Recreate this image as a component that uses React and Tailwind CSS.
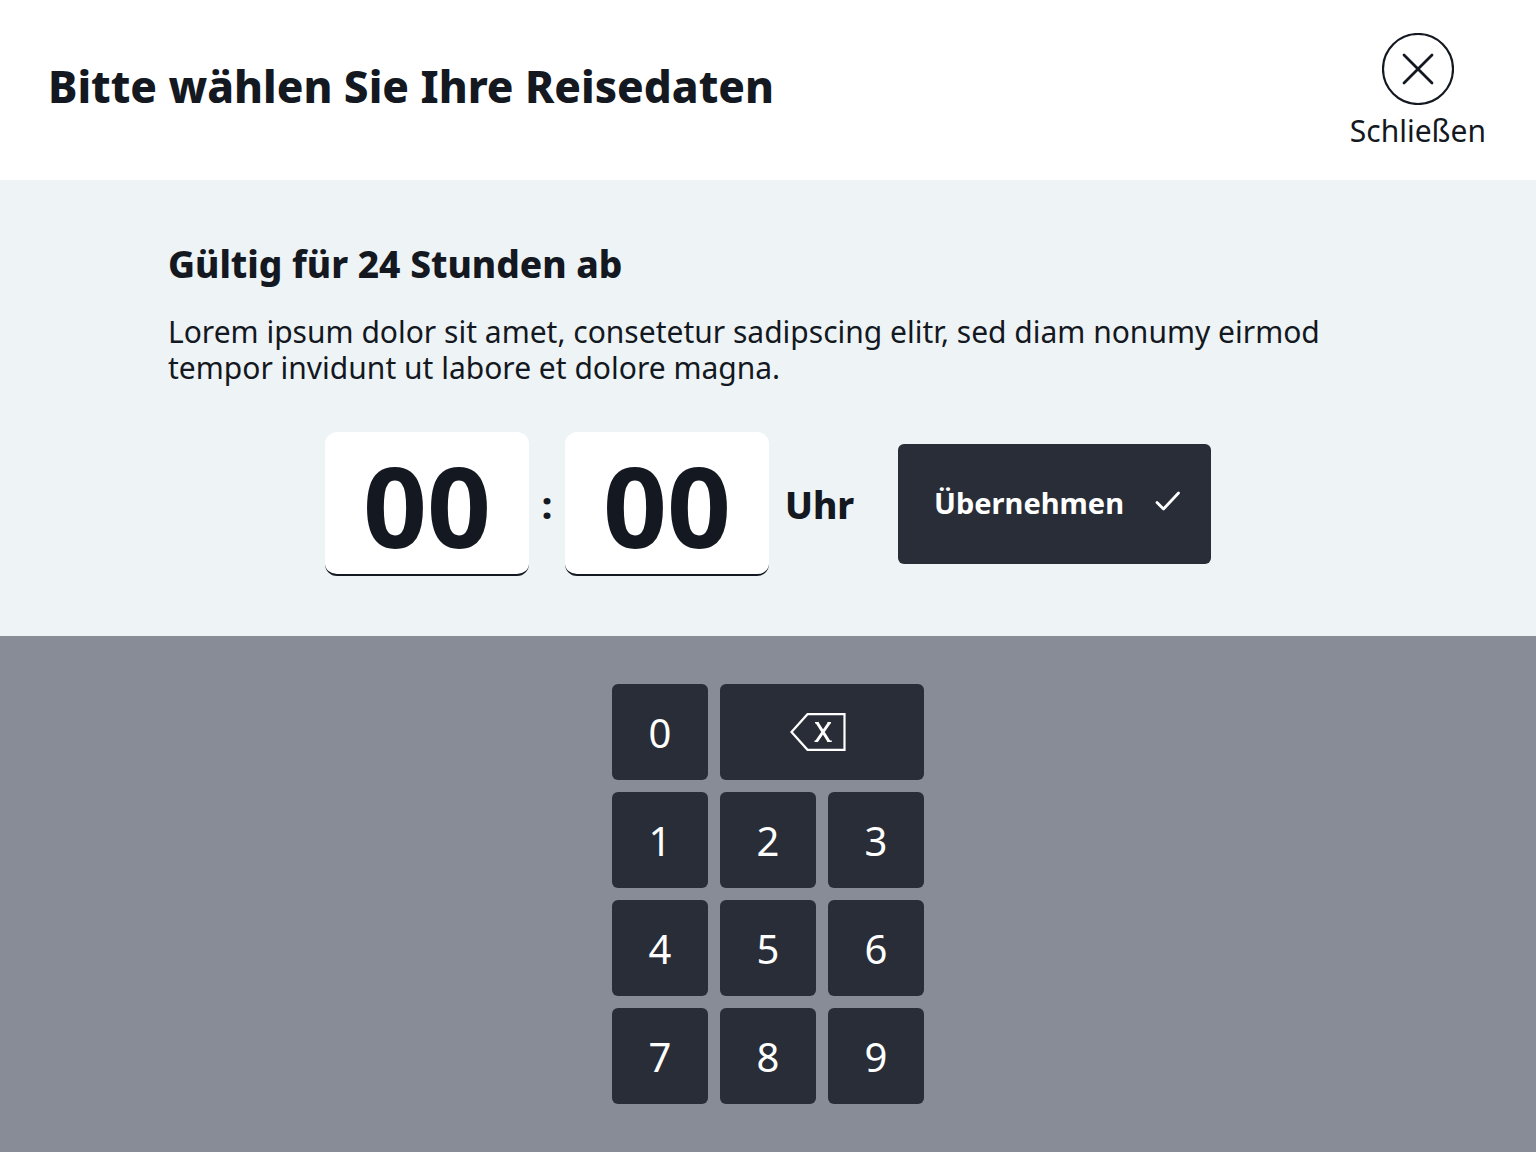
import { useState } from "react";

const KEYS = ["1", "2", "3", "4", "5", "6", "7", "8", "9"];

const keyClass =
  "flex h-24 items-center justify-center rounded-md bg-[#282d37] text-[40px] leading-none text-white";

const CloseIcon = () => (
  <svg viewBox="0 0 72 72" className="size-18" fill="none" stroke="currentColor" aria-hidden="true">
    <circle cx="36" cy="36" r="35" strokeWidth="2.2" />
    <path d="M22 22 50 50M50 22 22 50" strokeWidth="2.8" strokeLinecap="round" />
  </svg>
);

const CheckIcon = () => (
  <svg viewBox="0 0 26 20" className="mb-1 h-5 w-[26px]" fill="none" stroke="currentColor" aria-hidden="true">
    <path d="M2 11.5 8.5 18 23.5 2" strokeWidth="2.8" strokeLinecap="round" strokeLinejoin="round" />
  </svg>
);

const BackspaceIcon = () => (
  <svg viewBox="0 0 56 38" className="h-[38px] w-14" fill="none" stroke="currentColor" aria-hidden="true">
    <path d="M17.5 1.2H54.5V36.8H17.5L1.5 19Z" strokeWidth="2.2" />
    <path d="M27 9.5 39 28.5M39.5 9.5 26.5 28.5" strokeWidth="3" />
    <path d="M24.5 28.3H28M37.5 28.3H41.8M25 9.8H28.5M37.5 9.8H41" strokeWidth="1.4" />
  </svg>
);

const TimeInput = ({ label, value }) => (
  <input
    type="text"
    inputMode="numeric"
    aria-label={label}
    value={value}
    readOnly
    className="h-36 w-[204px] rounded-xl border-b-2 border-[#131821] bg-white pt-0.5 text-center text-[112px] leading-none font-bold outline-none"
  />
);

const Header = ({ onClose }) => (
  <header className="flex h-45 items-center justify-between bg-white pr-[50px] pl-12">
    <h1 className="pb-2 text-[44px] leading-none font-extrabold">
      Bitte wählen Sie Ihre Reisedaten
    </h1>
    <button type="button" onClick={onClose} className="flex flex-col items-center gap-2 pt-0.5">
      <CloseIcon />
      <span className="text-[30px] leading-9">Schließen</span>
    </button>
  </header>
);

const Keypad = ({ onDigit, onDelete }) => (
  <section className="flex grow justify-center bg-[#878c96] py-12">
    <div className="grid w-78 grid-cols-3 content-start gap-3">
      <button type="button" onClick={() => onDigit("0")} className={`${keyClass} pt-0.5`}>
        0
      </button>
      <button
        type="button"
        onClick={onDelete}
        aria-label="Löschen"
        className={`${keyClass} col-span-2 pr-2`}
      >
        <BackspaceIcon />
      </button>
      {KEYS.map((key) => (
        <button
          key={key}
          type="button"
          onClick={() => onDigit(key)}
          className={`${keyClass} pt-0.5`}
        >
          {key}
        </button>
      ))}
    </div>
  </section>
);

const App = () => {
  const [time, setTime] = useState("0000");

  const handleDigit = (digit) => setTime((t) => t.slice(1) + digit);
  const handleDelete = () => setTime((t) => "0" + t.slice(0, -1));

  return (
    <div className="flex min-h-screen flex-col bg-[#eef3f6] font-['Noto_Sans',sans-serif] text-[#131821]">
      <Header onClose={() => setTime("0000")} />

      <main className="px-42 pt-16 pb-15">
        <h2 className="text-[37px] leading-10 font-extrabold">Gültig für 24 Stunden ab</h2>
        <p className="mt-[30px] text-[30px] leading-9">
          Lorem ipsum dolor sit amet, consetetur sadipscing elitr, sed diam nonumy eirmod
          tempor invidunt ut labore et dolore magna.
        </p>

        <form
          onSubmit={(e) => e.preventDefault()}
          className="mt-[46px] flex items-center justify-center"
        >
          <TimeInput label="Stunden" value={time.slice(0, 2)} />
          <span className="w-9 text-center text-[37px] leading-none font-extrabold">:</span>
          <TimeInput label="Minuten" value={time.slice(2)} />
          <span className="w-[129px] pl-4 text-[37px] leading-none font-extrabold">Uhr</span>
          <button
            type="submit"
            className="flex h-30 w-[313px] items-center justify-between rounded-md bg-[#282d37] pr-[30px] pb-0.5 pl-9 text-[29px] font-bold text-white"
          >
            Übernehmen
            <CheckIcon />
          </button>
        </form>
      </main>

      <Keypad onDigit={handleDigit} onDelete={handleDelete} />
    </div>
  );
};

export default App;
